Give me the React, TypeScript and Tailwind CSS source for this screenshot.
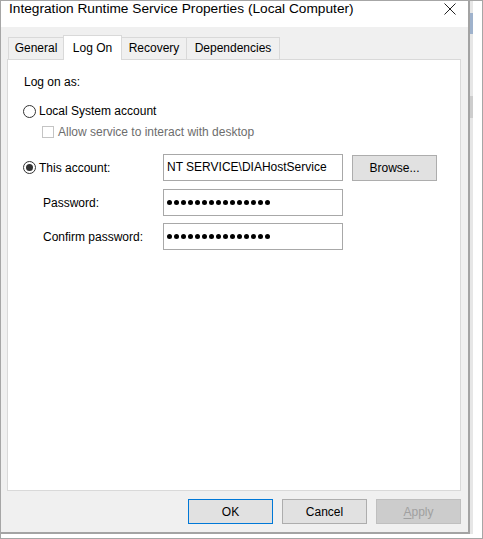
import React from "react";

// Service properties dialog, "Log On" page
const tabs = [
  { label: "General", w: "w-[55px]", edge: "border-l" },
  { label: "Log On", w: "w-[59px]", edge: "border-x", active: true },
  { label: "Recovery", w: "w-[65px]", edge: "border-r" },
  { label: "Dependencies", w: "w-[93px]", edge: "border-r" },
];

function Radio({ checked }: { checked?: boolean }) {
  return (
    <span className="flex h-[13px] w-[13px] shrink-0 items-center justify-center rounded-full border border-[#333333] bg-white">
      {checked && <span className="h-[7px] w-[7px] rounded-full bg-[#333333]" />}
    </span>
  );
}

function Dots({ count }: { count: number }) {
  return (
    <div className="flex gap-[2px]">
      {Array.from({ length: count }).map((_, i) => (
        <span key={i} className="h-[5px] w-[5px] rounded-full bg-black" />
      ))}
    </div>
  );
}

function Field({ children }: { children: React.ReactNode }) {
  return (
    <div className="flex h-[27px] w-[180px] items-center border border-[#a8a8a8] bg-white pl-[3px] pb-px">
      {children}
    </div>
  );
}

export default function App() {
  return (
    <div className="flex h-[539px] w-[483px] flex-col overflow-hidden border border-[#a6a6a6] bg-white font-['Liberation_Sans',Arial,sans-serif] text-[12px] leading-[14px] text-black">
      <div className="flex h-[533px]">
        {/* window */}
        <div className="flex w-[469px] flex-col border-r-2 border-b-2 border-[#a3a3a3]">
          {/* title bar */}
          <div className="flex h-[26px] items-start justify-between bg-white pl-[8px] pr-[12px]">
            <span className="text-[13.7px] leading-[16px]">
              Integration Runtime Service Properties (Local Computer)
            </span>
            <svg width="12" height="12" viewBox="0 0 12 12" className="mt-[2px]">
              <path d="M0.5 0.5 L11.5 11.5 M11.5 0.5 L0.5 11.5" stroke="#222" strokeWidth="1" />
            </svg>
          </div>

          <div className="flex flex-1 flex-col bg-[#f0f0f0] pl-[6px] pr-[7px] pt-[8px]">
            {/* tab strip */}
            <div className="relative z-10 flex h-[24px] items-end pl-px">
              {tabs.map((t) =>
                t.active ? (
                  <div
                    key={t.label}
                    className={`${t.w} -mb-px flex h-[25px] justify-center border-t border-x border-[#d9d9d9] bg-white pt-[5px]`}
                  >
                    {t.label}
                  </div>
                ) : (
                  <div
                    key={t.label}
                    className={`${t.w} flex h-[22px] justify-center border-t ${t.edge} border-[#d9d9d9] bg-[#f0f0f0] pt-[3px]`}
                  >
                    {t.label}
                  </div>
                )
              )}
            </div>

            {/* page */}
            <div className="flex h-[432px] flex-col border border-[#d9d9d9] bg-white pl-[15px]">
              <p className="ml-px mt-[15px]">Log on as:</p>

              <div className="mt-[15px] flex h-[14px] items-center gap-[3px]">
                <Radio />
                <span>Local System account</span>
              </div>

              <div className="ml-[19px] mt-[7px] flex h-[14px] items-center gap-[4px] text-[#6d6d6d]">
                <span className="h-[12px] w-[12px] border border-[#c4c4c4] bg-white" />
                <span>Allow service to interact with desktop</span>
              </div>

              <div className="mt-[15px] flex items-start">
                <div className="flex h-[27px] w-[140px] items-center gap-[3px]">
                  <Radio checked />
                  <span>This account:</span>
                </div>
                <Field>
                  <span>NT SERVICE\DIAHostService</span>
                </Field>
                <button className="ml-[9px] mt-px h-[26px] w-[85px] border border-[#adadad] bg-[#e1e1e1]">
                  Browse...
                </button>
              </div>

              <div className="mt-[8px] flex items-center">
                <span className="w-[140px] pl-[20px]">Password:</span>
                <Field>
                  <Dots count={15} />
                </Field>
              </div>

              <div className="mt-[7px] flex items-center">
                <span className="w-[140px] pl-[20px]">Confirm password:</span>
                <Field>
                  <Dots count={15} />
                </Field>
              </div>
            </div>

            {/* dialog buttons */}
            <div className="mt-[8px] flex justify-end gap-[9px]">
              <button className="h-[25px] w-[85px] border border-[#0078d7] bg-[#e1e1e1]">OK</button>
              <button className="h-[25px] w-[85px] border border-[#adadad] bg-[#e1e1e1]">Cancel</button>
              <button className="h-[25px] w-[85px] border border-[#bfbfbf] bg-[#cccccc] text-[#a0a0a0]">
                <span className="underline underline-offset-2">A</span>pply
              </button>
            </div>
          </div>
        </div>

        {/* page behind the window */}
        <div className="flex flex-1">
          <div className="flex w-[3px] flex-col bg-[#e6e6e6]">
            <div className="mt-[12px] h-[21px] bg-[#9fb2cc]" />
            <div className="mt-[62px] h-[22px] bg-[#cdcdcd]" />
          </div>
          <div className="flex-1 bg-white" />
        </div>
      </div>
    </div>
  );
}
